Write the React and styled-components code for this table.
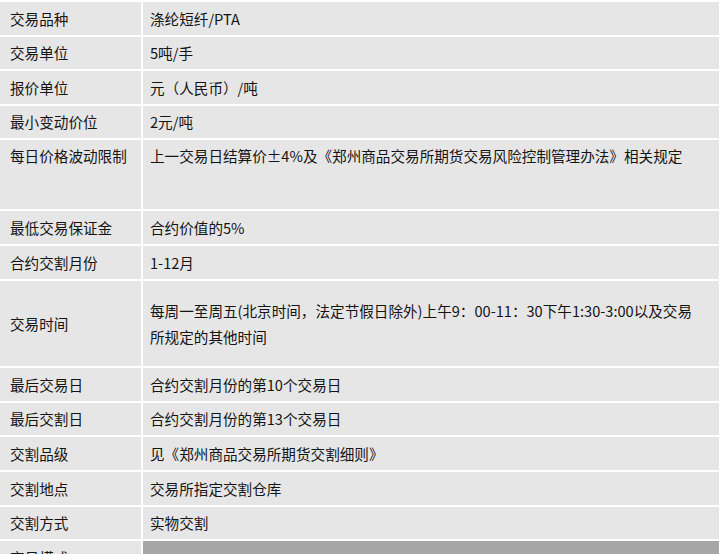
import React from 'react';
import styled, { createGlobalStyle } from 'styled-components';

const GlobalStyle = createGlobalStyle`
  html, body {
    margin: 0;
    padding: 0;
    background: #ffffff;
    overflow: hidden;
  }
  body {
    font-family: "Noto Sans CJK SC", "Liberation Sans", sans-serif;
  }
`;

const Table = styled.div`
  width: 720px;
  padding-top: 2px;
  display: flex;
  flex-direction: column;
  gap: 2px;
`;

const Row = styled.div`
  display: grid;
  grid-template-columns: 141px 1fr;
  column-gap: 2px;
  height: ${props => props.h}px;
  margin-right: 1px;
`;

const Cell = styled.div`
  background: ${props => props.dark ? '#a6a6a6' : '#e6e6e6'};
  color: #141414;
  font-size: 14.6px;
  line-height: 26px;
  display: flex;
  align-items: ${props => props.top ? 'flex-start' : 'center'};
  padding-top: ${props => props.top ? '3px' : '0'};
  box-sizing: border-box;
`;

const Label = styled(Cell)`
  padding-left: 10px;
`;

const Value = styled(Cell)`
  padding-left: 7px;
  padding-right: 22px;
`;

const rows = [
  { label: '交易品种', value: '涤纶短纤/PTA', h: 33 },
  { label: '交易单位', value: '5吨/手', h: 32 },
  { label: '报价单位', value: '元（人民币）/吨', h: 33 },
  { label: '最小变动价位', value: '2元/吨', h: 32 },
  { label: '每日价格波动限制', value: '上一交易日结算价±4%及《郑州商品交易所期货交易风险控制管理办法》相关规定', h: 69, top: true },
  { label: '最低交易保证金', value: '合约价值的5%', h: 33 },
  { label: '合约交割月份', value: '1-12月', h: 33 },
  { label: '交易时间', value: '每周一至周五(北京时间，法定节假日除外)上午9：00-11：30下午1:30-3:00以及交易所规定的其他时间', h: 85 },
  { label: '最后交易日', value: '合约交割月份的第10个交易日', h: 33 },
  { label: '最后交割日', value: '合约交割月份的第13个交易日', h: 32 },
  { label: '交割品级', value: '见《郑州商品交易所期货交割细则》', h: 33 },
  { label: '交割地点', value: '交易所指定交割仓库', h: 33 },
  { label: '交割方式', value: '实物交割', h: 32 },
  { label: '交易模式', value: '', h: 33, dark: true },
];

export default function App() {
  return (
    <>
      <GlobalStyle />
      <Table>
        {rows.map(r => (
          <Row key={r.label} h={r.h}>
            <Label top={r.top}>{r.label}</Label>
            <Value top={r.top} dark={r.dark}>{r.value}</Value>
          </Row>
        ))}
      </Table>
    </>
  );
}
